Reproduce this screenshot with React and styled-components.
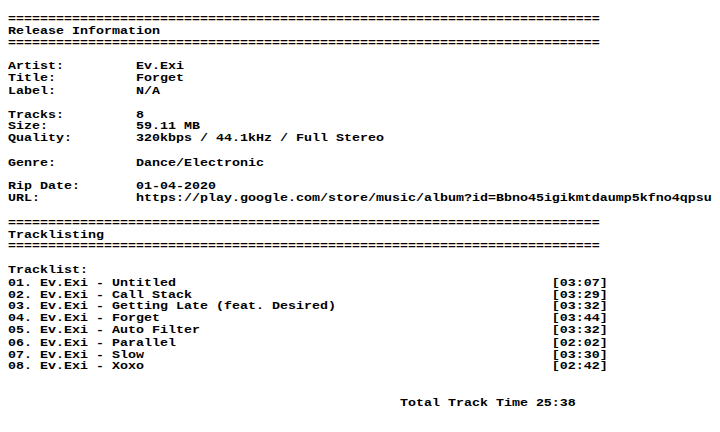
import styled, { createGlobalStyle } from 'styled-components';

const GlobalStyle = createGlobalStyle`
	html, body {
		margin: 0;
		background: #ffffff;
	}
`;

// the old 8x12 terminal font: 8px advance, 12px rows.
// Liberation Mono at 13.333px gives the 8px advance; the sheet is squeezed
// vertically so a 15.2px row ends up 12px tall.
const ROW = 15.2;

const Page = styled.div`
	height: 100vh;
	overflow: hidden;
`;

const Nfo = styled.div`
	padding: 16.5px 8px 0;
	font-family: 'Liberation Mono', 'DejaVu Sans Mono', monospace;
	font-weight: 700;
	font-size: 13.333px;
	line-height: ${ROW}px;
	color: #000000;
	white-space: pre;
	transform: scaleY(0.7895);
	transform-origin: 0 0;
`;

const Line = styled.div`
	height: ${ROW}px;
`;

const Blank = styled.div`
	height: ${(p) => (p.$lines || 1) * ROW}px;
`;

const Field = styled.div`
	display: grid;
	grid-template-columns: 16ch auto;
	height: ${ROW}px;
`;

const TrackRow = styled.div`
	display: flex;
	justify-content: space-between;
	width: 75ch;
	height: ${ROW}px;
`;

const Total = styled.div`
	height: ${ROW}px;
	padding-left: 49ch;
`;

const Rule = () => <Line>{'='.repeat(74)}</Line>;

const Section = ({ title }) => (
	<>
		<Rule />
		<Line>{title}</Line>
		<Rule />
	</>
);

const info = [
	[['Artist:', 'Ev.Exi'], ['Title:', 'Forget'], ['Label:', 'N/A']],
	[['Tracks:', '8'], ['Size:', '59.11 MB'], ['Quality:', '320kbps / 44.1kHz / Full Stereo']],
	[['Genre:', 'Dance/Electronic']],
	[
		['Rip Date:', '01-04-2020'],
		['URL:', 'https://play.google.com/store/music/album?id=Bbno45igikmtdaump5kfno4qpsu'],
	],
];

const tracks = [
	['Untitled', '03:07'],
	['Call Stack', '03:29'],
	['Getting Late (feat. Desired)', '03:32'],
	['Forget', '03:44'],
	['Auto Filter', '03:32'],
	['Parallel', '02:02'],
	['Slow', '03:30'],
	['Xoxo', '02:42'],
];

const App = () => {
	return (
		<Page>
			<GlobalStyle />
			<Nfo>
				<Section title='Release Information' />
				{info.map((group, i) => (
					<div key={i}>
						<Blank />
						{group.map(([label, value]) => (
							<Field key={label}>
								<span>{label}</span>
								<span>{value}</span>
							</Field>
						))}
					</div>
				))}
				<Blank />
				<Section title='Tracklisting' />
				<Blank />
				<Line>Tracklist:</Line>
				{tracks.map(([name, time], i) => (
					<TrackRow key={name}>
						<span>{`0${i + 1}. Ev.Exi - ${name}`}</span>
						<span>[{time}]</span>
					</TrackRow>
				))}
				<Blank $lines={2} />
				<Total>Total Track Time 25:38</Total>
			</Nfo>
		</Page>
	);
};

export default App;
